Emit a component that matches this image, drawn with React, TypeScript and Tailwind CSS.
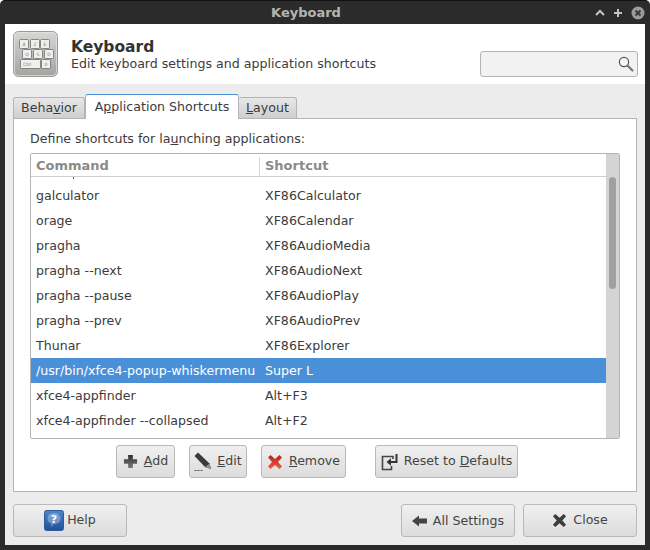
import React from 'react';

const rows = [
  ['galculator', 'XF86Calculator'],
  ['orage', 'XF86Calendar'],
  ['pragha', 'XF86AudioMedia'],
  ['pragha --next', 'XF86AudioNext'],
  ['pragha --pause', 'XF86AudioPlay'],
  ['pragha --prev', 'XF86AudioPrev'],
  ['Thunar', 'XF86Explorer'],
  ['/usr/bin/xfce4-popup-whiskermenu', 'Super L'],
  ['xfce4-appfinder', 'Alt+F3'],
  ['xfce4-appfinder --collapsed', 'Alt+F2'],
];

const KeyboardIcon = () => (
  <svg width="45" height="46" viewBox="0 0 45 46" className="shrink-0">
    <defs>
      <linearGradient id="kb" x1="0" y1="0" x2="0" y2="1">
        <stop offset="0" stopColor="#d6d6d4" />
        <stop offset="1" stopColor="#a3a3a1" />
      </linearGradient>
    </defs>
    <rect x="0.5" y="0.5" width="44" height="45" rx="5" fill="url(#kb)" stroke="#9a9a98" />
    <rect x="1.5" y="1.5" width="42" height="43" rx="4" fill="none" stroke="#e6e6e4" strokeOpacity="0.7" />
    {[[6, 8, 9], [17, 8, 9], [27, 8, 9], [9, 18, 9], [20, 18, 9], [31, 18, 9], [7, 28, 20], [28, 28, 9]].map(([x, y, w], i) => (
      <rect key={i} x={x + 0.5} y={y + 0.5} width={w} height="9" rx="1" fill="#efefed" stroke="#6f6f6d" strokeWidth="0.8" />
    ))}
    <g fontFamily="'DejaVu Sans', sans-serif" fontSize="4.5" fill="#777" textAnchor="middle">
      <text x="11" y="14.5">A</text>
      <text x="22" y="14.5">Z</text>
      <text x="32" y="14.5">E</text>
      <text x="14" y="24.5">Q</text>
      <text x="25" y="24.5">S</text>
      <text x="36" y="24.5">D</text>
      <text x="14" y="34.5">Ctrl</text>
      <text x="33" y="34.5">0</text>
    </g>
  </svg>
);

const SearchIcon = () => (
  <svg width="18" height="18" viewBox="0 0 18 18" className="shrink-0">
    <circle cx="7" cy="7" r="4.6" fill="#f7f7f6" stroke="#555" strokeWidth="1.2" />
    <path d="M10.5 10.5l5 5" stroke="#777" strokeWidth="2.2" strokeLinecap="round" />
  </svg>
);

const PlusIcon = () => (
  <svg width="15" height="15" viewBox="0 0 16 16">
    <defs>
      <linearGradient id="pl" x1="0" y1="0" x2="0" y2="1">
        <stop offset="0" stopColor="#2e2e2e" />
        <stop offset="1" stopColor="#7a7a7a" />
      </linearGradient>
    </defs>
    <path d="M5.500 1h5v4.500H15v5h-4.500V15h-5v-4.500H1v-5h4.500z" fill="url(#pl)" />
  </svg>
);

const PencilIcon = () => (
  <svg width="18" height="20" viewBox="0 0 18 20">
    <path d="M0.500 4L4 0.500 15.500 11.500 17 17 11 15z" fill="#3a3a3a" />
    <path d="M11 15l4.500-3.500L17 17z" fill="#8f8f8f" />
    <path d="M0.500 18.500h2M3.500 18.500h2M6.500 18.500h2" stroke="#555" strokeWidth="1.2" />
  </svg>
);

const RedCross = () => (
  <svg width="16" height="16" viewBox="0 0 16 16">
    <defs>
      <linearGradient id="rc" x1="0" y1="0" x2="0" y2="1">
        <stop offset="0" stopColor="#b8261b" />
        <stop offset="1" stopColor="#ee5a45" />
      </linearGradient>
    </defs>
    <path d="M3.500 1L8 5l4.500-4L15 3.500 11 8l4 4.500-2.500 2.500L8 11l-4.500 4L1 12.500 5 8 1 3.500z" fill="url(#rc)" />
  </svg>
);

const ResetIcon = () => (
  <svg width="18" height="18" viewBox="0 0 18 18" fill="none">
    <path d="M12 6V3.500H1.500v13h9V13" stroke="#444" strokeWidth="1.6" />
    <path d="M15.500 1v8H9" stroke="#333" strokeWidth="2" />
    <path d="M5.500 9l4.500-3.800v7.600z" fill="#333" />
  </svg>
);

const HelpIcon = () => (
  <svg width="20" height="21" viewBox="0 0 20 21">
    <defs>
      <linearGradient id="hp" x1="0" y1="0" x2="0" y2="1">
        <stop offset="0" stopColor="#4f86c9" />
        <stop offset="1" stopColor="#1f4f98" />
      </linearGradient>
    </defs>
    <rect x="0.500" y="0.500" width="19" height="20" rx="2" fill="url(#hp)" stroke="#2c5a9e" />
    <path d="M10 3c4 0 6.500 2.200 6.500 5.500S14 14 10 14l-3 3v-3.500C4.800 12.700 3.500 11 3.500 8.500 3.500 5.200 6 3 10 3z" fill="#dfe8f3" fillOpacity="0.35" />
    <text x="10" y="13" textAnchor="middle" fontFamily="'DejaVu Sans', sans-serif" fontWeight="700" fontSize="11" fill="#fff">?</text>
  </svg>
);

const BackIcon = () => (
  <svg width="15" height="12" viewBox="0 0 15 12">
    <path d="M0 6l7-5.500V3.500h8v5H7v3z" fill="#444" />
  </svg>
);

const CloseCross = () => (
  <svg width="15" height="15" viewBox="0 0 16 16">
    <path d="M3.500 1L8 5l4.500-4L15 3.500 11 8l4 4.500-2.500 2.500L8 11l-4.500 4L1 12.500 5 8 1 3.500z" fill="#3d3d3d" />
  </svg>
);

const Button = ({ className, children }: { className: string; children: React.ReactNode }) => (
  <button
    type="button"
    className={`h-[33px] shrink-0 flex items-center justify-center rounded-[3px] border border-[#b9b9b9] bg-gradient-to-b from-[#f0f0f0] to-[#dcdcdc] text-[#444] ${className}`}
  >
    {children}
  </button>
);

export default function App() {
  return (
    <div
      className="w-[650px] h-[550px] overflow-hidden bg-white text-[12.6px] text-[#3c3c3c]"
      style={{ fontFamily: "'DejaVu Sans', sans-serif" }}
    >
      <div className="w-full h-full flex flex-col rounded-t-[5px] bg-[#2b2b2b] border-t border-[#111] px-[5px] pb-[5px]">
        {/* Title bar */}
        <div className="h-[23px] shrink-0 flex items-center relative">
          <div className="w-full pr-[38px] text-center text-[13px] font-bold text-[#b5b5b5]">Keyboard</div>
          <div className="absolute right-0 top-0 h-full flex items-center gap-[8px] text-[#bdbdbd]">
            <svg width="10" height="8" viewBox="0 0 10 8">
              <path d="M1 6l4-4 4 4" fill="none" stroke="#c4c4c4" strokeWidth="2" />
            </svg>
            <svg width="10" height="10" viewBox="0 0 10 10">
              <path d="M5 1v8M1 5h8" stroke="#c4c4c4" strokeWidth="2" />
            </svg>
            <svg width="14" height="14" viewBox="0 0 14 14">
              <circle cx="7" cy="7" r="6.500" fill="#9b9b9b" />
              <path d="M4.500 4.500l5 5M9.500 4.500l-5 5" stroke="#3a3a3a" strokeWidth="2" />
            </svg>
          </div>
        </div>

        <div className="flex-1 flex flex-col min-h-0 bg-[#ececec]">
          {/* Header */}
          <div className="h-[60px] shrink-0 bg-white flex items-center pl-[8px] pr-[7px]">
            <KeyboardIcon />
            <div className="ml-[13px] flex-1">
              <div className="text-[15.5px] font-bold leading-[20px] text-[#333]">Keyboard</div>
              <div className="leading-[15px] -mt-px">Edit keyboard settings and application shortcuts</div>
            </div>
            <div className="w-[158px] h-[26px] mt-[20px] flex items-center justify-end pr-[2px] rounded-[3px] border border-[#b4b4b4] bg-[#f2f2f1]">
              <SearchIcon />
            </div>
          </div>

          {/* Notebook */}
          <div className="flex-1 flex flex-col px-[8px] pt-[9px]">
            <div className="h-[25px] shrink-0 flex items-end relative z-10">
              <div className="h-[21px] w-[72px] flex items-center justify-center rounded-t-[3px] border border-b-0 border-[#b4b4b4] bg-gradient-to-b from-[#e8e8e8] to-[#cfcfcf]">
                <span>Beha<u>v</u>ior</span>
              </div>
              <div className="h-[25px] w-[154px] flex items-center justify-center rounded-t-[3px] border border-b-0 border-[#b4b4b4] border-t-[#4a90d9] bg-white -mb-px">
                <span>A<u>p</u>plication Shortcuts</span>
              </div>
              <div className="h-[21px] w-[58px] flex items-center justify-center rounded-t-[3px] border border-b-0 border-l-0 border-[#b4b4b4] bg-gradient-to-b from-[#e8e8e8] to-[#cfcfcf]">
                <span><u>L</u>ayout</span>
              </div>
            </div>
            <div className="h-[374px] shrink-0 border border-[#b4b4b4] bg-white px-[16px] flex flex-col">
              <div className="h-[34px] shrink-0 flex items-center pt-[6px]">
                <span>Define shortcuts for la<u>u</u>nching applications:</span>
              </div>

              {/* Shortcut list */}
              <div className="h-[286px] shrink-0 flex border border-[#b4b4b4] rounded-[2px] overflow-hidden">
                <div className="flex-1 min-w-0 flex flex-col">
                  <div className="h-[23px] shrink-0 flex items-center pt-[2px] text-[13px] font-bold text-[#8a8a8a] border-b border-[#cfcfcf] bg-white">
                    <div className="w-[229px] pl-[5px] border-r border-[#d8d8d8] h-[19px] flex items-center">Command</div>
                    <div className="pl-[5px]">Shortcut</div>
                  </div>
                  <div className="flex-1 min-h-0 overflow-hidden pt-[6px] relative">
                    <div className="absolute left-[42px] top-0 w-px h-[2px] bg-[#666]" />
                    {rows.map(([command, shortcut], i) => (
                      <div
                        key={command}
                        className={`h-[25px] pt-[2px] flex items-center ${i === 7 ? 'bg-[#4a90d9] text-white' : ''}`}
                      >
                        <div className="w-[229px] pl-[5px] whitespace-nowrap">{command}</div>
                        <div className="pl-[5px]">{shortcut}</div>
                      </div>
                    ))}
                  </div>
                </div>
                <div className="w-[13px] shrink-0 bg-[#d4d4d4] pt-[23px] flex justify-center">
                  <div className="w-[7px] h-[112px] rounded-full bg-[#a0a0a0]" />
                </div>
              </div>

              <div className="flex items-center mt-[6px] pl-[86px]">
                <Button className="w-[59px] gap-[6px]"><PlusIcon /><span><u>A</u>dd</span></Button>
                <Button className="w-[58px] ml-[14px] gap-[5px]"><PencilIcon /><span><u>E</u>dit</span></Button>
                <Button className="w-[85px] ml-[14px] gap-[6px]"><RedCross /><span><u>R</u>emove</span></Button>
                <Button className="w-[143px] ml-[29px] gap-[5px]"><ResetIcon /><span>Reset to <u>D</u>efaults</span></Button>
              </div>
            </div>

            {/* Footer buttons */}
            <div className="flex items-center mt-[12px]">
              <Button className="w-[114px] gap-[3px]"><HelpIcon /><span>Help</span></Button>
              <div className="flex-1" />
              <Button className="w-[114px] gap-[6px]"><BackIcon /><span className="pt-[2px]">All Settings</span></Button>
              <Button className="w-[114px] ml-[8px] gap-[6px]"><CloseCross /><span>Close</span></Button>
            </div>
          </div>
        </div>
      </div>
    </div>
  );
}
